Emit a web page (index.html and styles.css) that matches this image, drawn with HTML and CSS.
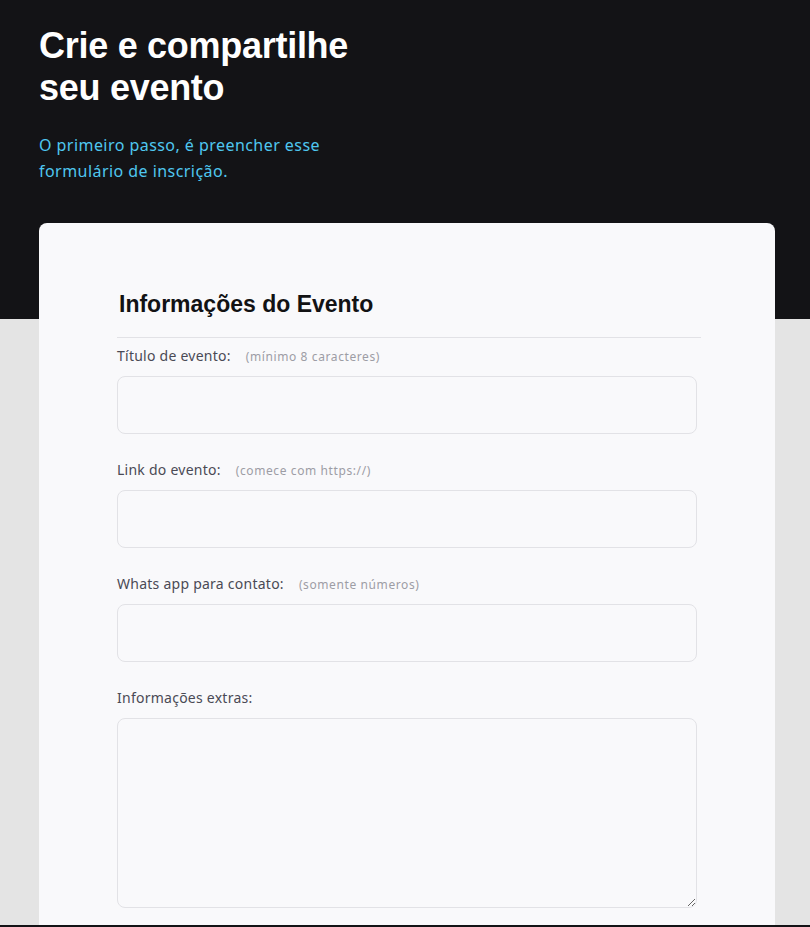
FILE: index.html
```html
<!DOCTYPE html>
<html lang="pt-BR">
<head>
<meta charset="utf-8">
<title>Crie e compartilhe seu evento</title>
<link rel="stylesheet" href="styles.css">
</head>
<body>
<header class="hero">
  <h1 class="hero-title">Crie e compartilhe<br>seu evento</h1>
  <p class="hero-sub">O primeiro passo, é preencher esse<br>formulário de inscrição.</p>
</header>
<main class="main">
  <form class="card">
    <h2 class="card-title">Informações do Evento</h2>
    <div class="field">
      <label class="label">Título de evento: <span class="hint">(mínimo 8 caracteres)</span></label>
      <input class="input" type="text">
    </div>
    <div class="field">
      <label class="label">Link do evento: <span class="hint">(comece com https://)</span></label>
      <input class="input" type="text">
    </div>
    <div class="field">
      <label class="label">Whats app para contato: <span class="hint">(somente números)</span></label>
      <input class="input" type="text">
    </div>
    <div class="field">
      <label class="label">Informações extras:</label>
      <textarea class="input textarea"></textarea>
    </div>
  </form>
</main>
<footer class="footer"></footer>
</body>
</html>
```
FILE: styles.css
```css
* { box-sizing: border-box; }
html, body { margin: 0; padding: 0; }
body {
  background: #e4e4e4;
  font-family: "Noto Sans", sans-serif;
  color: #4a4a55;
}
.hero {
  background: #131316;
  height: 319px;
  padding: 25px 39px 0;
}
.hero-title {
  margin: 0;
  font-family: "Liberation Sans", Arial, sans-serif;
  font-weight: 700;
  font-size: 36px;
  line-height: 42px;
  color: #ffffff;
  letter-spacing: -0.28px;
}
.hero-sub {
  margin: 23px 0 0;
  font-size: 16px;
  line-height: 26px;
  letter-spacing: 0.45px;
  color: #4fc7f0;
}
.main {
  margin-top: -96px;
  padding: 0 35px 0 39px;
}
.card {
  background: #f9f9fb;
  border-radius: 8px 8px 0 0;
  height: 702px;
  padding: 66px 78px 0;
  display: flex;
  flex-direction: column;
}
.card-title {
  margin: 0 -4px 0 0;
  padding: 0 0 18px 2px;
  font-family: "Liberation Sans", Arial, sans-serif;
  font-weight: 700;
  font-size: 23px;
  line-height: 30px;
  color: #121214;
  border-bottom: 1px solid #e2e2e6;
}
.field {
  display: flex;
  flex-direction: column;
  margin-top: 8px;
}
.field + .field { margin-top: 26px; }
.label {
  display: flex;
  align-items: baseline;
  gap: 15px;
  height: 20px;
  font-size: 14px;
  line-height: 20px;
  letter-spacing: 0.25px;
  color: #4a4a55;
  margin-bottom: 10px;
}
.hint {
  font-size: 12px;
  letter-spacing: 0.6px;
  color: #9d9da5;
}
.input {
  width: 580px;
  height: 58px;
  background: #f9f9fb;
  border: 1px solid #e2e2e6;
  border-radius: 8px;
  font: inherit;
  padding: 0 16px;
  outline: none;
}
.textarea {
  height: 190px;
  resize: vertical;
  padding: 16px;
}
.footer {
  height: 2px;
  background: #131316;
}
```
